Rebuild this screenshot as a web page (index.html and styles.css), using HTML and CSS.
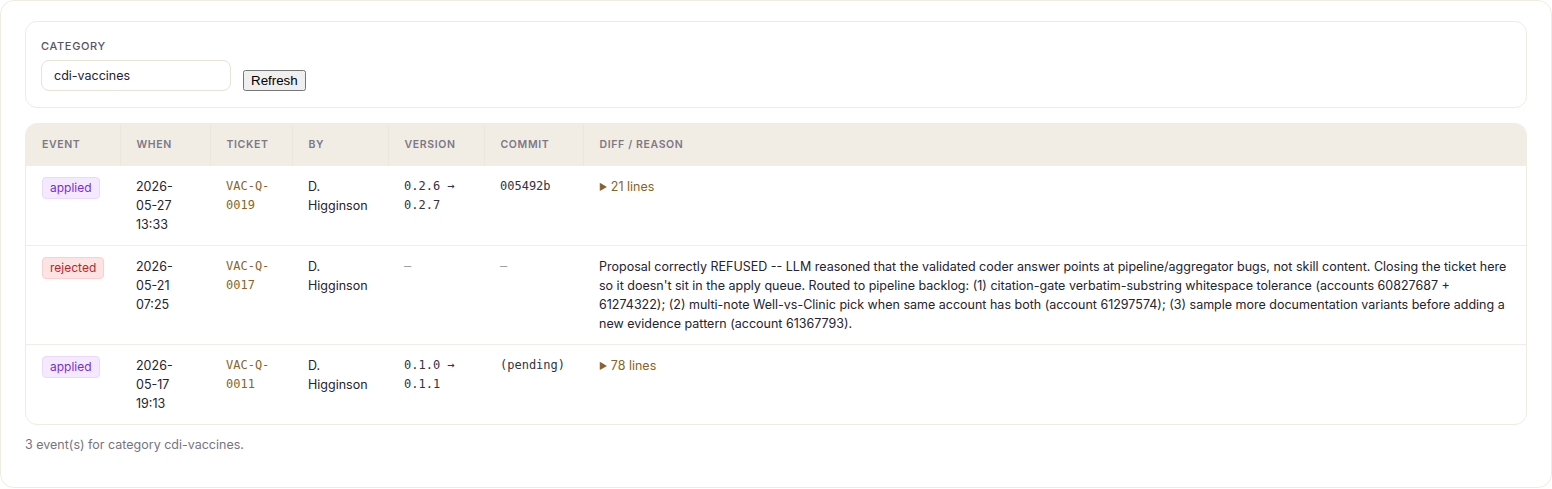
FILE: index.html
```html
<!DOCTYPE html>
<html lang="en">
<head>
<meta charset="utf-8">
<title>Skill change log</title>
<link rel="stylesheet" href="styles.css">
</head>
<body>
<main class="panel">
  <section class="filter-card">
    <label class="field-label" for="category">Category</label>
    <div class="filter-row">
      <input id="category" class="text-input" type="text" value="cdi-vaccines">
      <button type="button">Refresh</button>
    </div>
  </section>

  <section class="table-card">
    <table class="events">
      <colgroup>
        <col class="c-event"><col class="c-when"><col class="c-ticket"><col class="c-by">
        <col class="c-version"><col class="c-commit"><col class="c-diff">
      </colgroup>
      <thead>
        <tr>
          <th>Event</th><th>When</th><th>Ticket</th><th>By</th><th>Version</th><th>Commit</th><th>Diff / Reason</th>
        </tr>
      </thead>
      <tbody>
        <tr>
          <td><span class="badge badge-applied">applied</span></td>
          <td class="when">2026-05-27 13:33</td>
          <td class="mono ticket">VAC-Q-0019</td>
          <td>D. Higginson</td>
          <td class="mono">0.2.6 → 0.2.7</td>
          <td class="mono">005492b</td>
          <td><span class="diff-toggle"><span class="caret">▶</span> 21 lines</span></td>
        </tr>
        <tr>
          <td><span class="badge badge-rejected">rejected</span></td>
          <td class="when">2026-05-21 07:25</td>
          <td class="mono ticket">VAC-Q-0017</td>
          <td>D. Higginson</td>
          <td class="mono muted">—</td>
          <td class="mono muted">—</td>
          <td>Proposal correctly REFUSED -- LLM reasoned that the validated coder answer points at pipeline/aggregator bugs, not skill content. Closing the ticket here so it doesn't sit in the apply queue. Routed to pipeline backlog: (1) citation-gate verbatim-substring whitespace tolerance (accounts 60827687 + 61274322); (2) multi-note Well-vs-Clinic pick when same account has both (account 61297574); (3) sample more documentation variants before adding a new evidence pattern (account 61367793).</td>
        </tr>
        <tr>
          <td><span class="badge badge-applied">applied</span></td>
          <td class="when">2026-05-17 19:13</td>
          <td class="mono ticket">VAC-Q-0011</td>
          <td>D. Higginson</td>
          <td class="mono">0.1.0 → 0.1.1</td>
          <td class="mono">(pending)</td>
          <td><span class="diff-toggle"><span class="caret">▶</span> 78 lines</span></td>
        </tr>
      </tbody>
    </table>
  </section>

  <p class="summary">3 event(s) for category cdi-vaccines.</p>
</main>
</body>
</html>
```

FILE: styles.css
```css
html, body {
  margin: 0;
  background: #ffffff;
}

body {
  font-family: Inter, "Noto Sans", sans-serif;
  color: #25232d;
}

.panel {
  box-sizing: border-box;
  height: 488px;
  border: 1px solid #efece2;
  border-radius: 14px;
  padding: 20px 24px 24px;
  background: #ffffff;
}

/* filter bar */
.filter-card {
  border: 1px solid #efece3;
  border-radius: 12px;
  padding: 16px 15px 16px;
}

.field-label {
  display: block;
  font-size: 11px;
  line-height: 16px;
  font-weight: 500;
  letter-spacing: 0.06em;
  text-transform: uppercase;
  color: #575465;
  margin-bottom: 6px;
}

.filter-row {
  display: flex;
  align-items: flex-end;
  gap: 12px;
}

.text-input {
  box-sizing: border-box;
  width: 190px;
  height: 31px;
  padding: 0 12px;
  border: 1px solid #e7e3d6;
  border-radius: 8px;
  font-family: Inter, sans-serif;
  font-size: 12.5px;
  color: #25232d;
  background: #fff;
}

/* events table */
.table-card {
  margin-top: 15px;
  border: 1px solid #efece3;
  border-radius: 12px;
  overflow: hidden;
}

.events {
  width: 100%;
  border-collapse: collapse;
  table-layout: fixed;
}

.c-event { width: 94px; }
.c-when { width: 90px; }
.c-ticket { width: 82px; }
.c-by { width: 96px; }
.c-version { width: 96px; }
.c-commit { width: 99px; }

.events th {
  background: #f1ede5;
  padding: 13px 16px;
  font-size: 10.5px;
  line-height: 16px;
  font-weight: 600;
  letter-spacing: 0.06em;
  text-transform: uppercase;
  text-align: left;
  color: #7c7886;
  border-right: 1px solid #ebe7dd;
}

.events th:last-child {
  border-right: none;
}

.events td {
  padding: 11px 16px 11px;
  font-size: 12.5px;
  line-height: 19px;
  vertical-align: top;
  border-top: 1px solid #f1eee7;
  color: #25232d;
}

.events tbody tr:first-child td {
  border-top: none;
}

.events td.when {
  padding-right: 22px;
}

.events td.mono {
  font-family: "DejaVu Sans Mono", "Liberation Mono", monospace;
  font-size: 12px;
  color: #34323f;
}

.events td.ticket {
  color: #8a6526;
}

.events td.muted {
  color: #9c98a6;
}

.badge {
  display: inline-block;
  padding: 1px 7px;
  border-radius: 4px;
  font-size: 12px;
  line-height: 18px;
  border: 1px solid transparent;
}

.badge-applied {
  background: #f4e9ff;
  border-color: #ead8fd;
  color: #7a2fc4;
}

.badge-rejected {
  background: #fde3e3;
  border-color: #f9cfcf;
  color: #b52828;
}

.diff-toggle {
  color: #8a6424;
  cursor: pointer;
}

.caret {
  font-size: 9px;
  vertical-align: 1px;
}

.summary {
  margin: 12px 0 0;
  font-size: 12.5px;
  line-height: 16px;
  color: #77747f;
}
```
